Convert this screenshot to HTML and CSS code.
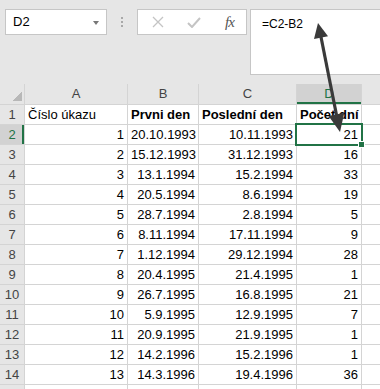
FILE: index.html
```html
<!DOCTYPE html>
<html lang="cs">
<head>
  <meta charset="UTF-8">
  <title>Počet dní</title>
  <link rel="stylesheet" href="styles.css">
</head>
<body>

<div class="toolbar">
  <div class="namebox">
    <span>D2</span>
    <span class="caret"></span>
  </div>
  <div class="grip"><i></i><i></i><i></i></div>
  <div class="fxbtns">
    <svg width="12" height="12" viewBox="0 0 12 12"><path d="M1 1L11 11M11 1L1 11" stroke="#c4c4c4" stroke-width="1.3" fill="none"/></svg>
    <svg width="14" height="11" viewBox="0 0 14 11"><path d="M1 6L5 10L13 1" stroke="#c4c4c4" stroke-width="2" fill="none"/></svg>
    <span class="fx">fx</span>
  </div>
  <div class="formula">=C2-B2</div>
</div>

<div class="sheet">
  <div class="corner"></div><div class="colhead">A</div><div class="colhead">B</div><div class="colhead">C</div><div class="colhead active">D</div><div class="colhead"></div>

  <div class="rowhead">1</div><div class="cell">Číslo úkazu</div><div class="cell b">Prvni den</div><div class="cell b">Poslední den</div><div class="cell b">Počet dní</div><div class="cell"></div>
  <div class="rowhead active">2</div><div class="cell num">1</div><div class="cell num">20.10.1993</div><div class="cell num">10.11.1993</div><div class="cell num selected">21</div><div class="cell"></div>
  <div class="rowhead">3</div><div class="cell num">2</div><div class="cell num">15.12.1993</div><div class="cell num">31.12.1993</div><div class="cell num">16</div><div class="cell"></div>
  <div class="rowhead">4</div><div class="cell num">3</div><div class="cell num">13.1.1994</div><div class="cell num">15.2.1994</div><div class="cell num">33</div><div class="cell"></div>
  <div class="rowhead">5</div><div class="cell num">4</div><div class="cell num">20.5.1994</div><div class="cell num">8.6.1994</div><div class="cell num">19</div><div class="cell"></div>
  <div class="rowhead">6</div><div class="cell num">5</div><div class="cell num">28.7.1994</div><div class="cell num">2.8.1994</div><div class="cell num">5</div><div class="cell"></div>
  <div class="rowhead">7</div><div class="cell num">6</div><div class="cell num">8.11.1994</div><div class="cell num">17.11.1994</div><div class="cell num">9</div><div class="cell"></div>
  <div class="rowhead">8</div><div class="cell num">7</div><div class="cell num">1.12.1994</div><div class="cell num">29.12.1994</div><div class="cell num">28</div><div class="cell"></div>
  <div class="rowhead">9</div><div class="cell num">8</div><div class="cell num">20.4.1995</div><div class="cell num">21.4.1995</div><div class="cell num">1</div><div class="cell"></div>
  <div class="rowhead">10</div><div class="cell num">9</div><div class="cell num">26.7.1995</div><div class="cell num">16.8.1995</div><div class="cell num">21</div><div class="cell"></div>
  <div class="rowhead">11</div><div class="cell num">10</div><div class="cell num">5.9.1995</div><div class="cell num">12.9.1995</div><div class="cell num">7</div><div class="cell"></div>
  <div class="rowhead">12</div><div class="cell num">11</div><div class="cell num">20.9.1995</div><div class="cell num">21.9.1995</div><div class="cell num">1</div><div class="cell"></div>
  <div class="rowhead">13</div><div class="cell num">12</div><div class="cell num">14.2.1996</div><div class="cell num">15.2.1996</div><div class="cell num">1</div><div class="cell"></div>
  <div class="rowhead">14</div><div class="cell num">13</div><div class="cell num">14.3.1996</div><div class="cell num">19.4.1996</div><div class="cell num">36</div><div class="cell"></div>
  <div class="rowhead"></div><div class="cell"></div><div class="cell"></div><div class="cell"></div><div class="cell"></div><div class="cell"></div>
</div>

<!-- callout arrow from the formula to the selected cell -->
<svg class="arrow" width="380" height="389" viewBox="0 0 380 389">
  <line x1="321" y1="37" x2="336.5" y2="115" stroke="#3a3a3a" stroke-width="3.2"/>
  <polygon points="318,23 328,36.3 314,39.1" fill="#3a3a3a"/>
  <polygon points="340,132 344.3,112.8 328.6,116" fill="#3a3a3a"/>
</svg>

</body>
</html>
```

FILE: styles.css
```css
body {
  margin: 0;
  width: 380px;
  height: 389px;
  overflow: hidden;
  position: relative;
  font-family: "Liberation Sans", Arial, sans-serif;
  background: #e6e6e6;
  color: #000;
}

/* formula bar */
.toolbar {
  display: flex;
  align-items: flex-start;
  height: 84px;
  box-sizing: border-box;
  padding: 9px 0 0 5px;
}

.namebox {
  display: flex;
  align-items: center;
  justify-content: space-between;
  width: 102px;
  height: 26px;
  box-sizing: border-box;
  padding: 0 7px 0 7px;
  background: #fff;
  border: 1px solid #c6c6c6;
  font-size: 13px;
  line-height: 24px;
}

.caret {
  width: 0;
  height: 0;
  border-left: 3.5px solid transparent;
  border-right: 3.5px solid transparent;
  border-top: 4px solid #777;
  margin-top: 1px;
}

.grip {
  display: flex;
  flex-direction: column;
  gap: 2px;
  margin: 8px 0 0 14px;
}

.grip i {
  width: 2px;
  height: 2px;
  background: #a8a8a8;
}

.fxbtns {
  display: flex;
  align-items: center;
  width: 110px;
  height: 26px;
  box-sizing: border-box;
  margin-left: 14px;
  padding-left: 14px;
  gap: 23px;
  background: #fff;
  border: 1px solid #c6c6c6;
}

.fx {
  font-family: "Liberation Serif", "Times New Roman", serif;
  font-style: italic;
  font-size: 15px;
  color: #555;
  letter-spacing: -1px;
  margin-left: 1px;
}

.formula {
  flex: 1;
  height: 66px;
  box-sizing: border-box;
  margin-left: 3px;
  padding: 6px 0 0 11px;
  background: #fff;
  border: 1px solid #c6c6c6;
  border-right: none;
  font-size: 12px;
  line-height: 16px;
}

/* grid */
.sheet {
  display: grid;
  grid-template-columns: 24px 102px 70px 97px 64px 1fr;
  grid-template-rows: 20px;
  grid-auto-rows: 19px;
  gap: 1px;
  background: #d4d4d4;
  font-size: 13px;
  line-height: 19px;
}

.corner,
.colhead,
.rowhead {
  background: #e6e6e6;
  color: #444;
  text-align: center;
}

.corner {
  background: #e6e6e6 linear-gradient(135deg, transparent 50%, #b8b8b8 50%) no-repeat right 2px bottom 3px / 9px 9px;
}

.colhead {
  line-height: 20px;
}

.colhead.active {
  background: #d2d2d2;
  color: #217346;
  box-shadow: inset 0 -2px #217346;
}

.rowhead.active {
  background: #d2d2d2;
  color: #217346;
  box-shadow: inset -2px 0 #217346;
}

.cell {
  background: #fff;
  padding: 0 3px;
  white-space: nowrap;
  overflow: hidden;
}

.num {
  text-align: right;
}

.b {
  font-weight: bold;
}

.selected {
  position: relative;
  overflow: visible;
  outline: 2px solid #217346;
}

.selected::after {
  content: "";
  position: absolute;
  right: -4px;
  bottom: -4px;
  width: 5px;
  height: 5px;
  background: #217346;
  border: 1px solid #fff;
}

.arrow {
  position: absolute;
  top: 0;
  left: 0;
  pointer-events: none;
}
```
